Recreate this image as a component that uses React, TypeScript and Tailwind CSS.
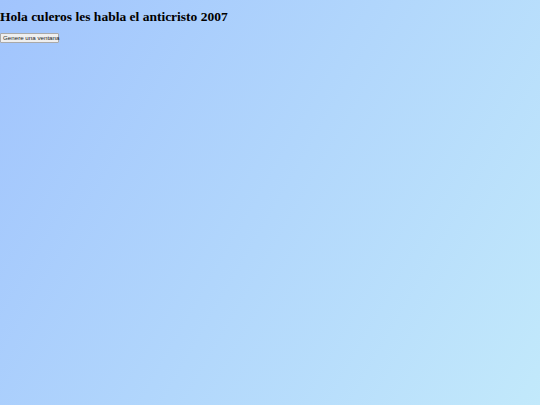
export default function App() {
  return (
    <div className="min-h-[405px] w-full bg-[linear-gradient(120deg,#a1c4fd_0%,#c2e9fb_100%)]">
      <h1 className="m-0 pt-[9px] text-[13.5px] font-bold leading-[15px] text-black [font-family:'Liberation_Serif',serif]">
        Hola culeros les habla el anticristo 2007
      </h1>
      <div className="flex pt-[9px]">
        <button className="h-[10px] w-[59px] whitespace-nowrap rounded-[1px] border border-[#a9a9a9] bg-[#efefef] px-[2px] text-[6.2px] leading-[8px] text-[#222] [font-family:'Liberation_Sans',sans-serif]">
          Genere una ventana
        </button>
      </div>
    </div>
  )
}
